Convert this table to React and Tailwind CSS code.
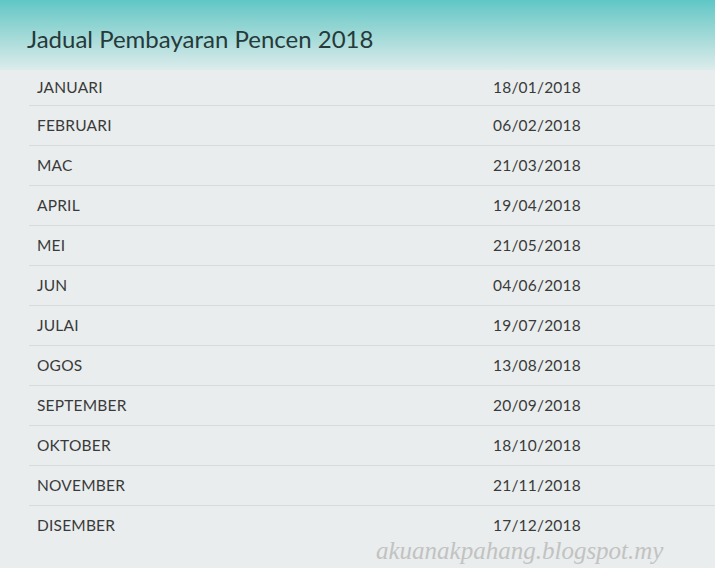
const rows = [
  ['JANUARI', '18/01/2018'],
  ['FEBRUARI', '06/02/2018'],
  ['MAC', '21/03/2018'],
  ['APRIL', '19/04/2018'],
  ['MEI', '21/05/2018'],
  ['JUN', '04/06/2018'],
  ['JULAI', '19/07/2018'],
  ['OGOS', '13/08/2018'],
  ['SEPTEMBER', '20/09/2018'],
  ['OKTOBER', '18/10/2018'],
  ['NOVEMBER', '21/11/2018'],
  ['DISEMBER', '17/12/2018'],
];

export default function App() {
  return (
    <div className="relative w-[715px] h-[568px] overflow-hidden bg-[#e9eded] font-['Lato',sans-serif]">
      <div className="h-[70px] bg-gradient-to-b from-[#5ec7c6] via-[#9fd9d7] to-[#dcecec] pl-[27px] pt-[24px]">
        <h1 className="text-[24px] leading-[30px] text-[#263a3a]">Jadual Pembayaran Pencen 2018</h1>
      </div>
      <div className="pl-[29px]">
        {rows.map(([m, d], i) => (
          <div
            key={m}
            className={`flex items-center text-[15.5px] tracking-[0.2px] text-[#3a3a3a] ${i === 0 ? 'h-[36px]' : 'h-[40px]'} ${i < rows.length - 1 ? 'border-b border-[#d6dcdc]' : ''}`}
          >
            <span className="w-[464px] pl-[8px]">{m}</span>
            <span>{d}</span>
          </div>
        ))}
      </div>
      <span className="absolute left-[376px] top-[536px] font-['Liberation_Serif',serif] italic text-[25px] leading-[30px] text-[#c2c2c2]">
        akuanakpahang.blogspot.my
      </span>
    </div>
  );
}
